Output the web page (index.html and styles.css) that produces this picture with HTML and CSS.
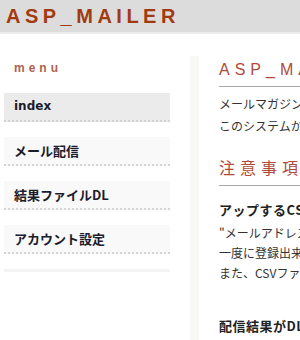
FILE: index.html
```html
<!DOCTYPE html>
<html lang="ja">
<head>
  <meta charset="UTF-8">
  <title>ASP_MAILER</title>
  <link rel="stylesheet" href="styles.css">
</head>
<body>

<div class="header">
  <h1>ASP_MAILER</h1>
</div>

<div class="wrap">
  <!-- Side menu -->
  <div class="side">
    <h2>menu</h2>
    <ul class="menu">
      <li class="active"><a href="#">index</a></li>
      <li><a href="#">メール配信</a></li>
      <li><a href="#">結果ファイルDL</a></li>
      <li><a href="#">アカウント設定</a></li>
    </ul>
    <div class="side-foot"></div>
  </div>

  <div class="bar"></div>

  <!-- Main content -->
  <div class="main">
    <h3>ASP_MAILER</h3>
    <p>メールマガジン配信システムです。<br>このシステムからメールを配信できます。</p>

    <h3>注意事項</h3>
    <h4>アップするCSVファイルについて</h4>
    <p>"メールアドレス"の列が必要です。<br>一度に登録出来る件数は制限があります。<br>また、CSVファイルの文字コードに注意してください。</p>

    <h4>配信結果がDLできない場合</h4>
  </div>
</div>

</body>
</html>
```

FILE: styles.css
```css
body { margin: 0; background: #fff; font-family: "Liberation Sans", "Noto Sans CJK JP", sans-serif; color: #222; overflow: hidden; }
.header { background: #dcdcdc; height: 32px; border-bottom: 2px solid #ececec; }
.header h1 { margin: 0; padding: 6px 0 0 6px; font-size: 20px; line-height: 20px; letter-spacing: 4.5px; color: #a23a10; font-weight: bold; }

.wrap { display: flex; align-items: flex-start; }
.side { width: 166px; margin-left: 4px; flex-shrink: 0; }
.side h2 { margin: 27px 0 0 10px; font-size: 12px; line-height: 14px; letter-spacing: 4px; color: #b0624c; }
.menu { list-style: none; margin: 18px 0 0; padding: 0; }
.menu li { background: #f9f9f9; border-bottom: 2px dotted #d4d4d4; margin-bottom: 15px; height: 27px; }
.menu li.active { background: #ebebeb; }
.menu a { display: block; padding: 0 10px; line-height: 27px; font-size: 13px; font-weight: bold; color: #1c1c2c; text-decoration: none; font-family: "Noto Sans CJK JP", sans-serif; }
.menu li.active a { font-family: "DejaVu Sans", sans-serif; font-size: 12px; }
.side-foot { height: 3px; background: #f4f4f4; }

.bar { width: 9px; margin: 22px 0 0 20px; height: 300px; background: #f8f8f6; flex-shrink: 0; }
.main { flex: 1; min-width: 0; overflow: hidden; padding: 28px 0 0 20px; white-space: nowrap; font-family: "Noto Sans CJK JP", sans-serif; }
.main h3 { margin: 0; padding-bottom: 8px; border-bottom: 1px solid #aaa; font-size: 16px; line-height: 16px; font-weight: normal; letter-spacing: 5px; color: #b04a3a; font-family: "Liberation Sans", "Noto Sans CJK JP", sans-serif; }
.main p { margin: 6px 0 0; font-size: 12px; line-height: 22px; color: #333; }
.main p + h3 { margin-top: 24px; }
.main h4 { margin: 15px 0 0; font-size: 13px; line-height: 18px; letter-spacing: 0.5px; }
.main h4 + p { margin-top: 4px; line-height: 20px; }
.main p + h4 { margin-top: 34px; }
```
